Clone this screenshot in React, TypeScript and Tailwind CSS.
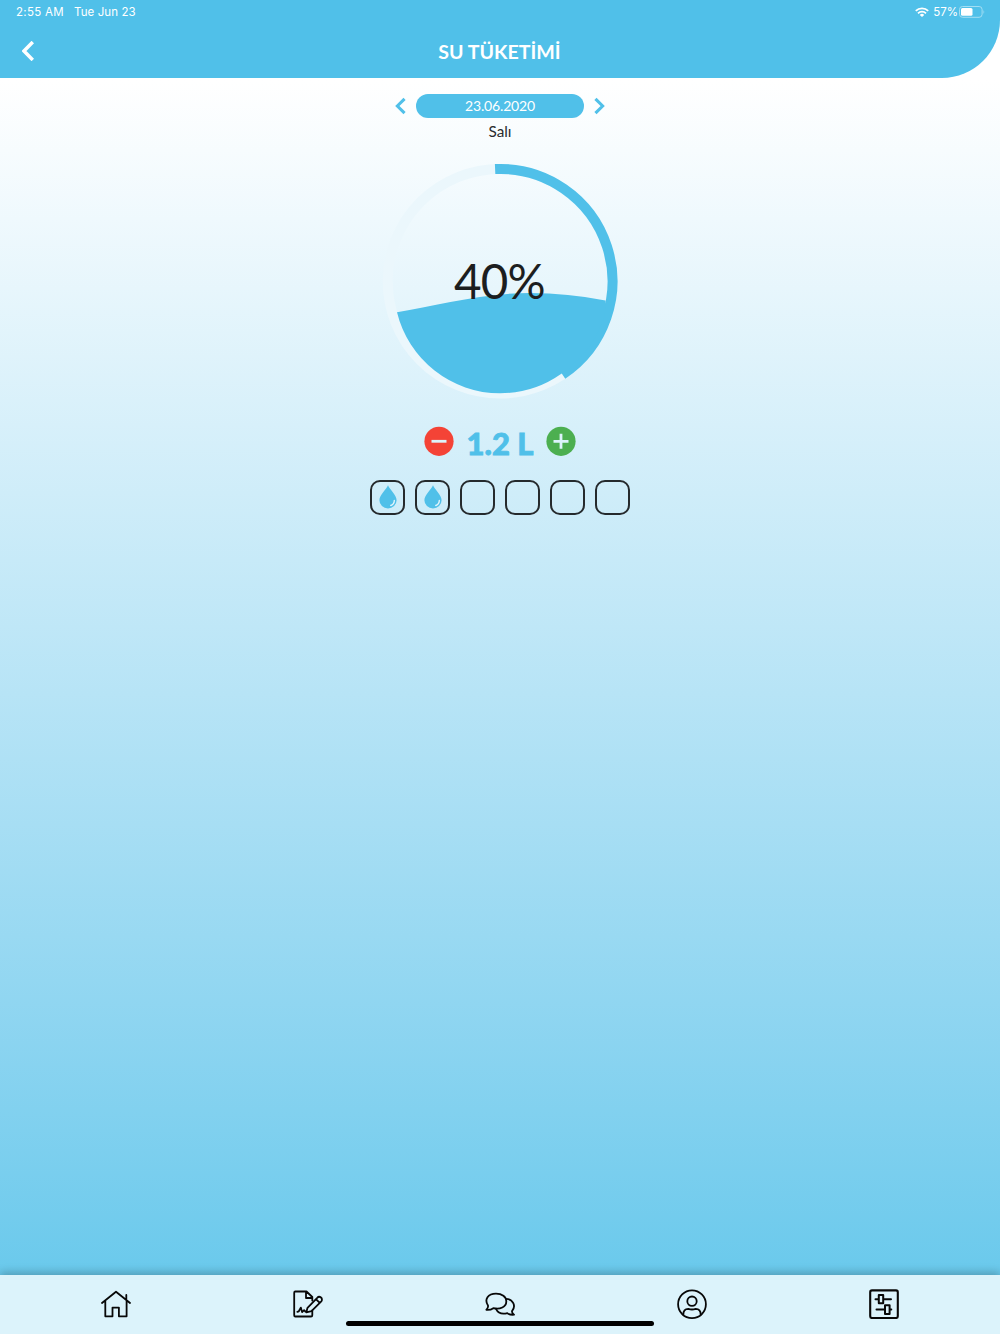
import React from "react";

const lato = "font-['Lato',sans-serif]";

function Chevron({ className, d, w }: { className: string; d: string; w: number }) {
  return (
    <svg viewBox="0 0 12 20" className={className} fill="none" stroke="currentColor" strokeWidth={w}>
      <path d={d} />
    </svg>
  );
}

function StatusBar() {
  return (
    <div className="flex h-6 items-center justify-between pr-[14px] pl-4 font-['Inter',sans-serif] text-[11.5px] text-white">
      <div className="flex gap-[10px] pt-px">
        <span className="tracking-[0.3px]">2:55 AM</span>
        <span className="tracking-[0.1px]">Tue Jun 23</span>
      </div>
      <div className="flex items-center">
        <svg viewBox="0 0 14 10" className="mr-1 h-[10px] w-[14px]" fill="none" stroke="white" strokeWidth="1.8">
          <path d="M.8 3.900a8.800 8.800 0 0 1 12.400 0M3 6.300a5.700 5.700 0 0 1 8 0" />
          <path d="M4.800 7.900a3.100 3.100 0 0 1 4.400 0L7 10z" fill="white" stroke="none" />
        </svg>
        <span className="pt-px">57%</span>
        <svg viewBox="0 0 27 12" className="ml-px h-3 w-[27px]">
          <rect x=".5" y=".5" width="22.600" height="10.800" rx="3" fill="none" stroke="#a3def3" />
          <rect x="2" y="2" width="11.500" height="7.800" rx="1.500" fill="white" />
          <path d="M24.500 4q1.600 2 0 4z" fill="#a3def3" />
        </svg>
      </div>
    </div>
  );
}

function Header() {
  return (
    <header className="h-[78px] rounded-br-[58px] bg-[#50c0e9]">
      <StatusBar />
      <div className="grid h-[54px] grid-cols-[60px_1fr_61px] items-center text-white">
        <Chevron className="ml-[22px] h-5 w-3" d="M10.800 1 2 10l8.800 9" w={3.5} />
        <h1 className={`${lato} pt-[2px] text-center text-[19.6px] leading-none font-bold`}>SU TÜKETİMİ</h1>
      </div>
    </header>
  );
}

function Gauge() {
  return (
    <div className="relative mt-[22px] h-[236px] w-[236px]">
      <svg viewBox="382 163 236 236" className="h-full w-full" fill="none">
        <circle cx="500" cy="281.300" r="112.300" stroke="#ebf7fc" strokeWidth="10" />
        <path d="M495.100 169.100A112.300 112.300 0 0 1 562.500 374.700" stroke="#50c0e9" strokeWidth="10" />
        <path d="M397 312.300C435 306 482 293 530 293Q568 293 605.500 300.500L606 310A107 107 0 0 1 561 374A106.300 106.300 0 0 1 500 393.300A106.300 106.300 0 0 1 397 312.300Z" fill="#50c0e9" />
      </svg>
      <div className={`${lato} absolute inset-0 flex items-center justify-center pr-px text-[47.500px] tracking-[-0.8px] text-[#1c1e1f]`}>
        <span>40%</span>
      </div>
    </div>
  );
}

function Glass({ filled }: { filled: boolean }) {
  return (
    <div className="flex h-[35px] w-[35px] items-center justify-center rounded-[10px] border-2 border-[#252a2d]">
      {filled && (
        <svg viewBox="0 0 18 24" className="h-6 w-[18px]">
          <path d="M9 .3C7.600 4.300.4 10 .4 15.300a8.600 8.200 0 0 0 17.200 0C17.600 10 10.400 4.300 9 .3z" fill="#50c0e9" />
          <path d="M15.300 15.500Q15.200 19.200 11.800 20.500" fill="none" stroke="#e4f5fc" strokeWidth="1.400" strokeLinecap="round" />
        </svg>
      )}
    </div>
  );
}

function NavIcon({ children }: { children: React.ReactNode }) {
  return (
    <svg viewBox="0 0 30 30" className="h-[30px] w-[30px]" fill="none" stroke="#080808" strokeWidth="1.800" strokeLinejoin="round" strokeLinecap="round">
      {children}
    </svg>
  );
}

function BottomNav() {
  return (
    <nav className="relative grid h-[59px] grid-cols-5 bg-[#dcf3fb] px-5 pt-[14px] shadow-[0_-3px_8px_rgba(0,0,0,0.22)]">
      <div className="flex justify-center">
        <NavIcon>
          <path d="M1 14 15 2.800 29 14M4.300 11.500V27.300h7.200v-8.700h6.400v8.700h7.700V11.500M25.300 10.500V6" />
        </NavIcon>
      </div>
      <div className="flex justify-center">
        <NavIcon>
          <path d="M19.300 11.500V8L13.500 2.500H2.300Q1.200 2.500 1.200 3.700V26.200Q1.200 27.500 2.300 27.500H18Q19.300 27.500 19.300 26.200V21.500M13 3V9H19" />
          <path d="m14.500 18.800 9.700-10a2.500 2.500 0 0 1 4.100 3.500l-9.800 9.800-5.200 1.300zM23 10.200l3.700 3.700M4.300 22.800l1.500-.5 2-3.700 1.300 4.500 2-2 1.300 1.500h2" />
        </NavIcon>
      </div>
      <div className="flex justify-center">
        <NavIcon>
          <path d="M1.300 20.800Q3.500 18.500 3 16.500C-1 10.500 3 4.600 11 4.600c6 0 10.300 3.300 10.300 7.800 0 5.500-6.300 8.500-13 6.800Q5.500 21.200 1.300 20.800z" />
          <path d="M21 9.800c7 .3 10.400 7.300 6 12.300q-.2 2 2 3.600-4.500.4-6.700-1.600c-4.800 1.300-9.300-.1-11.300-4.300" />
        </NavIcon>
      </div>
      <div className="flex justify-center">
        <NavIcon>
          <circle cx="15" cy="15.200" r="13.900" />
          <circle cx="15" cy="12.200" r="4.700" />
          <path d="M6.300 25.700c0-4 2-5.800 5-5.800q3.700 1.200 7.400 0c3 0 5 1.800 5 5.800" />
        </NavIcon>
      </div>
      <div className="flex justify-center">
        <NavIcon>
          <rect x="1.200" y="1.400" width="27.600" height="27.600" rx="1.800" strokeWidth="2.100" />
          <path d="M6.500 10.200h3M14.500 10.200h7.500M7.500 20.500h8M20.800 20.500h1.500M9.800 6h4.400v8.300H9.800zM16 16.300h4.600v8.700H16z" strokeWidth="2" />
        </NavIcon>
      </div>
      <div className="absolute bottom-[8px] left-1/2 h-[5px] w-[308px] -translate-x-1/2 rounded-full bg-black" />
    </nav>
  );
}

export default function App() {
  return (
    <div className="flex h-[1334px] w-[1000px] flex-col overflow-hidden bg-linear-to-b from-white from-[6%] to-[#69c9ec] to-[96%]">
      <Header />
      <main className={`${lato} flex flex-1 flex-col items-center pt-[15.500px]`}>
        <div className="flex items-center gap-[10px] text-[#50c0e9]">
          <Chevron className="h-[18px] w-[11px]" d="M10.500 2 2.500 10l8 8" w={3.4} />
          <div className="flex h-[24.500px] w-[168px] items-center justify-center rounded-full bg-[#50c0e9] text-[14px] tracking-[-0.15px] text-white">23.06.2020</div>
          <Chevron className="h-[18px] w-[11px]" d="m1.500 2 8 8-8 8" w={3.4} />
        </div>
        <div className="mt-[3px] text-[15.300px] leading-[20px] text-[#292c2e]">Salı</div>
        <Gauge />
        <div className="mt-[26px] flex h-[32px] items-center text-[#50c0e9]">
          <svg viewBox="0 0 30 30" className="h-[30px] w-[30px]">
            <circle cx="15" cy="15.300" r="14.600" fill="#f44336" />
            <path d="M7.500 15.300h15" stroke="#dcf3fb" strokeWidth="2.800" />
          </svg>
          <div className="w-[92px] pt-[4px] text-center text-[31px] leading-none font-black [-webkit-text-stroke:0.8px_#50c0e9]">1.2 L</div>
          <svg viewBox="0 0 30 30" className="h-[30px] w-[30px]">
            <circle cx="15" cy="15.300" r="14.600" fill="#4caf50" />
            <path d="M7.500 15.300h15M15 7.800v15" stroke="#dcf3fb" strokeWidth="2.800" />
          </svg>
        </div>
        <div className="mt-[22.600px] flex gap-[10px]">
          {[true, true, false, false, false, false].map((filled, i) => (
            <Glass key={i} filled={filled} />
          ))}
        </div>
      </main>
      <BottomNav />
    </div>
  );
}
